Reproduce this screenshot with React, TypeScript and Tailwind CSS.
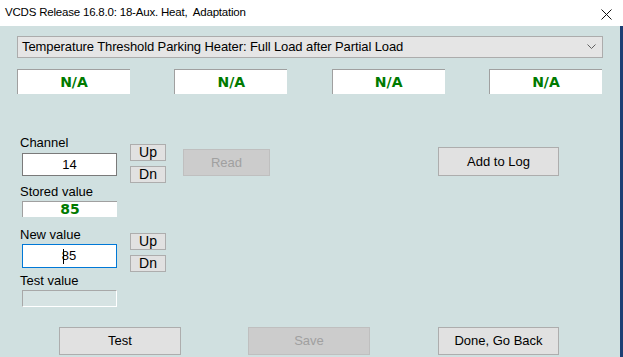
import React from 'react';

const font = { fontFamily: '"Liberation Sans", Arial, sans-serif' };
const boldFont = { fontFamily: '"DejaVu Sans", Verdana, sans-serif' };

const WinButton: React.FC<{ label: string; disabled?: boolean; className?: string }> = ({
  label,
  disabled = false,
  className = '',
}) => (
  <div
    className={`flex items-center justify-center text-[13px] border ${
      disabled ? 'bg-[#cccccc] border-[#bfbfbf] text-[#a0a0a0]' : 'bg-[#e1e1e1] border-[#adadad] text-black'
    } ${className}`}
  >
    {label}
  </div>
);

const NaBox: React.FC = () => (
  <div className="w-[113px] h-[25px] bg-white border-t border-l border-[#a0a0a0] flex items-center justify-center">
    <span className="text-[14px] font-bold text-[#007a00]" style={boldFont}>
      N/A
    </span>
  </div>
);

const UpDn: React.FC<{ mt: string }> = ({ mt }) => (
  <div className={`flex flex-col ${mt}`}>
    <WinButton label="Up" className="w-[36px] h-[17px] text-[14px]" />
    <WinButton label="Dn" className="w-[36px] h-[17px] mt-[5px] text-[14px]" />
  </div>
);

export default function App() {
  return (
    <div className="w-[623px] h-[357px] overflow-hidden flex flex-col bg-white" style={font}>
      {/* Title bar */}
      <div className="h-[26px] flex items-center justify-between bg-white pl-[5px] pr-[11px]">
        <span className="text-[11.5px] text-black whitespace-pre tracking-[-0.2px]">
          VCDS Release 16.8.0: 18-Aux. Heat,  Adaptation
        </span>
        <svg width="11" height="11" viewBox="0 0 11 11" className="mt-[2px]">
          <path d="M0.5 0.5 L10.5 10.5 M10.5 0.5 L0.5 10.5" stroke="#111" strokeWidth="1" />
        </svg>
      </div>

      <div className="flex flex-1">
        <div className="flex-1 bg-[#d0e0e0] flex flex-col">
          {/* Dropdown */}
          <div className="mt-[10px] ml-[17px] w-[586px] h-[22px] bg-[#e5e5e5] border border-[#acacac] flex items-center justify-between pl-[4px] pr-[6px]">
            <span className="text-[13px] text-black tracking-[-0.1px]">
              Temperature Threshold Parking Heater: Full Load after Partial Load
            </span>
            <svg width="9" height="6" viewBox="0 0 9 6">
              <path d="M0.5 0.5 L4.5 4.5 L8.5 0.5" stroke="#606060" strokeWidth="1" fill="none" />
            </svg>
          </div>

          {/* N/A row */}
          <div className="mt-[11px] ml-[17px] w-[585px] flex justify-between">
            <NaBox />
            <NaBox />
            <NaBox />
            <NaBox />
          </div>

          {/* Middle area */}
          <div className="flex items-start">
            <div className="ml-[20px] w-[97px] flex flex-col mt-[41px]">
              <div className="text-[13px] leading-[15px] text-black">Channel</div>
              <div className="ml-[2px] mt-[3px] w-[95px] h-[23px] bg-white border border-[#7a7a7a] flex items-center justify-center text-[13px] text-black">
                14
              </div>
              <div className="mt-[8px] text-[13px] leading-[15px] text-black">Stored value</div>
              <div className="ml-[2px] mt-[2px] w-[95px] h-[16px] bg-white border-t border-l border-[#a0a0a0] flex items-center justify-center">
                <span className="text-[14px] font-bold text-[#007a00]" style={boldFont}>
                  85
                </span>
              </div>
              <div className="mt-[10px] text-[13px] leading-[15px] text-black">New value</div>
              <div className="ml-[2px] mt-[2px] w-[95px] h-[24px] bg-white border border-[#0078d7] flex items-center justify-center text-[13px] text-black">
                <span className="inline-block w-px h-[15px] bg-black -mr-[2px]" />
                85
              </div>
              <div className="mt-[5px] text-[13px] leading-[15px] text-black">Test value</div>
              <div className="ml-[2px] mt-[2px] w-[95px] h-[17px] bg-[#d6e3e3] border border-t-[#a8a8a8] border-l-[#a8a8a8] border-b-white border-r-white" />
            </div>

            <div className="ml-[13px] flex flex-col">
              <UpDn mt="mt-[50px]" />
              <UpDn mt="mt-[50px]" />
            </div>

            <WinButton label="Read" disabled className="ml-[17px] mt-[55px] w-[87px] h-[27px]" />
            <WinButton label="Add to Log" className="ml-[168px] mt-[53px] w-[121px] h-[29px]" />
          </div>

          {/* Bottom buttons */}
          <div className="flex mt-[20px]">
            <WinButton label="Test" className="ml-[59px] w-[122px] h-[28px]" />
            <WinButton label="Save" disabled className="ml-[67px] w-[122px] h-[28px]" />
            <WinButton label="Done, Go Back" className="ml-[68px] w-[121px] h-[28px]" />
          </div>
        </div>
        <div className="w-[3px] bg-[#1c3f74]" />
      </div>
    </div>
  );
}
